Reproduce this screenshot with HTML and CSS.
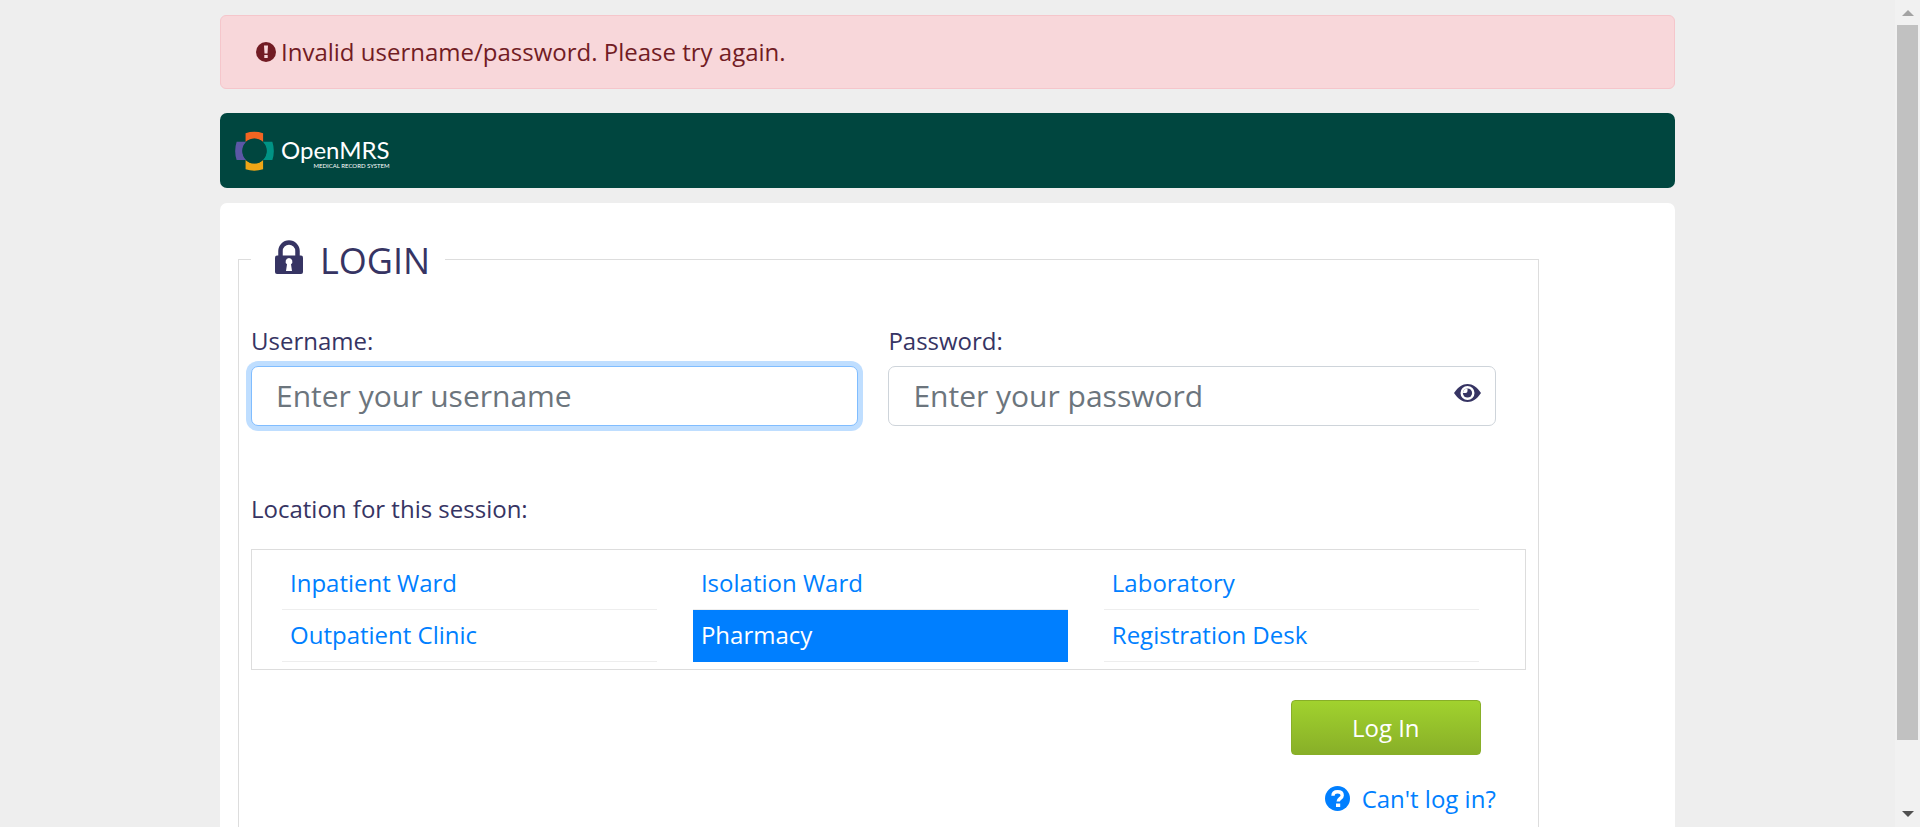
FILE: index.html
```html
<!DOCTYPE html>
<html lang="en">
<head>
<meta charset="utf-8">
<title>Login</title>
<link rel="stylesheet" href="styles.css">
</head>
<body>
<div class="shell">
  <div class="viewport">
    <div class="container">
      <div class="alert" role="alert">
        <svg class="alert-icon" viewBox="0 0 20 20" aria-hidden="true"><circle cx="10" cy="10" r="10" fill="#721c24"/><path d="M8 3.5h4l-.5 8h-3zM8.3 13h3.4v3H8.3z" fill="#f8d7da"/></svg>
        <span>Invalid username/password. Please try again.</span>
      </div>

      <header class="header">
        <a class="logo" href="#">
          <svg class="logo-mark" viewBox="30 34 118 120" aria-hidden="true">
            <path d="M62 40Q88 31 115 40V67A37 37 0 0 0 62 67Z" fill="#f26522"/>
            <path d="M62 149Q88 158 115 149V121A37 37 0 0 1 62 121Z" fill="#eea616"/>
            <path d="M35 66H65A37 37 0 0 0 65 121H35Q26 94 35 66Z" fill="#5b57a6"/>
            <path d="M143 66H113A37 37 0 0 1 113 121H143Q152 94 143 66Z" fill="#009384"/>
            <circle cx="89" cy="94" r="37" fill="#00463f"/>
          </svg>
          <span class="logo-words">
            <span class="logo-name">OpenMRS</span>
            <span class="logo-tag">MEDICAL RECORD SYSTEM</span>
          </span>
        </a>
      </header>

      <main class="content">
        <form>
          <fieldset class="login">
            <legend class="legend">
              <svg class="lock-icon" viewBox="0 0 28 34" aria-hidden="true"><path d="M5.500 17V11a8.500 8.500 0 0 1 17 0v6" fill="none" stroke="#363463" stroke-width="4.500"/><rect y="15.500" width="28" height="18.500" rx="2" fill="#363463"/><path d="M14 18a3.500 3.500 0 0 0-2 6.300L11 31h6l-1-6.700A3.500 3.500 0 0 0 14 18z" fill="#fff"/></svg>
              <span>LOGIN</span>
            </legend>

            <div class="fields">
              <div class="field">
                <label for="username">Username:</label>
                <input class="input input-focused" id="username" type="text" placeholder="Enter your username">
              </div>
              <div class="field">
                <label for="password">Password:</label>
                <div class="password">
                  <input class="input" id="password" type="password" placeholder="Enter your password">
                  <button class="eye" type="button" aria-label="Show password">
                    <svg viewBox="0 0 27 18" aria-hidden="true"><path d="M0 9C4 3 8.500 0 13.500 0S23 3 27 9c-4 6-8.500 9-13.500 9S4 15 0 9z" fill="#363463"/><circle cx="13.500" cy="9" r="7" fill="#fff"/><circle cx="13.500" cy="9" r="4.600" fill="#363463"/><path d="M9 9a4.500 4.500 0 0 1 4.500-4.500V7A2 2 0 0 1 11.500 9z" fill="#fff"/></svg>
                  </button>
                </div>
              </div>
            </div>

            <p class="location-label" id="location-label">Location for this session:</p>
            <ul class="locations" aria-labelledby="location-label">
              <li><a class="location" href="#">Inpatient Ward</a></li>
              <li><a class="location" href="#">Isolation Ward</a></li>
              <li><a class="location" href="#">Laboratory</a></li>
              <li><a class="location" href="#">Outpatient Clinic</a></li>
              <li><a class="location location-selected" href="#">Pharmacy</a></li>
              <li><a class="location" href="#">Registration Desk</a></li>
            </ul>

            <div class="actions">
              <button class="submit" type="submit">Log In</button>
            </div>
            <div class="help">
              <a class="help-link" href="#">
                <svg class="help-icon" viewBox="0 0 25 25" aria-hidden="true"><circle cx="12.500" cy="12.500" r="12.500" fill="#007fff"/><path d="M8 9.800C8 7 10 5.700 12.600 5.700s4.600 1.300 4.600 3.700c0 3-4 3-4 6.200" fill="none" stroke="#fff" stroke-width="3.400"/><path d="M11 17.500h4.200v3.500H11z" fill="#fff"/></svg>
                <span>Can't log in?</span>
              </a>
            </div>
          </fieldset>
        </form>
      </main>
    </div>
  </div>
  <div class="scrollbar" aria-hidden="true">
    <svg class="arrow" viewBox="0 0 12 6"><path d="M0 6L6 0l6 6z" fill="#a3a3a3"/></svg>
    <div class="track"><div class="thumb"></div></div>
    <svg class="arrow" viewBox="0 0 12 6"><path d="M0 0l6 6 6-6z" fill="#505050"/></svg>
  </div>
</div>
</body>
</html>
```

FILE: styles.css
```css
* { box-sizing: border-box; }

body {
  margin: 0;
  background: #eee;
  color: #363463;
  font-family: "Open Sans", sans-serif;
  font-size: 24px;
  line-height: 36px;
}

a { color: #007fff; text-decoration: none; }
button, input { font: inherit; }

.shell {
  display: grid;
  grid-template-columns: 1fr 25px;
  height: 100vh;
}

.viewport { overflow: hidden; }

.container {
  max-width: 1455px;
  margin: 0 auto;
  padding-top: 15px;
}

.alert {
  display: flex;
  align-items: center;
  gap: 5px;
  margin-bottom: 24px;
  padding: 18px 35px;
  border: 1px solid #f5c6cb;
  border-radius: 6px;
  background: #f8d7da;
  color: #721c24;
}
.alert-icon { width: 20px; height: 20px; }

.header {
  display: flex;
  align-items: center;
  min-height: 75px;
  margin-bottom: 15px;
  padding: 0 15px;
  border-radius: 7px;
  background: #00463f;
}
.logo { display: flex; align-items: center; gap: 7px; color: #fff; }
.logo-mark { width: 39px; height: 40px; }
.logo-words {
  display: flex;
  flex-direction: column;
  align-items: flex-end;
  padding-top: 7px;
  font-family: Lato, sans-serif;
}
.logo-name { font-size: 24px; line-height: 24px; }
.logo-tag { font-size: 6px; line-height: 8px; }

.content {
  padding: 27px 18px 60px;
  border-radius: 7px;
  background: #fff;
}

.login {
  width: calc(100% * 11 / 12);
  margin: 0;
  padding: 35px 12px 60px;
  border: 1px solid #ddd;
}
.legend {
  display: flex;
  align-items: center;
  gap: 17px;
  padding: 4px 15px 0 24px;
  font-size: 36px;
  line-height: 54px;
}
.lock-icon { width: 28px; height: 34px; margin-bottom: 8px; }

.fields {
  display: grid;
  grid-template-columns: 1fr 1fr;
  gap: 30px;
  padding-right: 30px;
}
.field { display: flex; flex-direction: column; gap: 7px; }
.input {
  width: 100%;
  height: 60px;
  padding: 0 24px 2px;
  border: 1px solid #ced4da;
  border-radius: 7px;
  background: #fff;
  color: #495057;
  font-size: 30px;
  outline: none;
}
.input::placeholder { color: #6c757d; opacity: 1; }
.input-focused {
  border-color: #80bdff;
  box-shadow: 0 0 0 5px rgba(0, 123, 255, 0.25);
}
.password { position: relative; }
.eye {
  position: absolute;
  top: 18px;
  right: 15px;
  display: flex;
  padding: 0;
  border: 0;
  background: none;
}
.eye svg { width: 27px; height: 18px; }

.location-label { margin: 65px 0 22px; }
.locations {
  display: grid;
  grid-template-columns: repeat(3, 1fr);
  column-gap: 36px;
  margin: 0;
  padding: 8px 46px 7px 30px;
  border: 1px solid #ddd;
  list-style: none;
}
.location {
  display: block;
  padding: 7px 8px 8px;
  border-bottom: 1px solid #eee;
}
.location-selected {
  border-color: #007fff;
  background: #007fff;
  color: #fff;
}

.actions {
  display: flex;
  justify-content: flex-end;
  margin: 30px 45px 26px 0;
}
.submit {
  min-width: 190px;
  height: 55px;
  border: 1px solid #88af28;
  border-radius: 4px;
  background: linear-gradient(#a1d22e, #88af28);
  color: #fff;
}
.help { display: flex; justify-content: flex-end; padding-right: 30px; }
.help-link { display: flex; align-items: center; gap: 12px; }
.help-icon { width: 25px; height: 25px; margin-bottom: 2px; }

.scrollbar {
  display: flex;
  flex-direction: column;
  align-items: center;
  gap: 9px;
  padding: 10px 2px;
  background: #f1f1f1;
}
.arrow { width: 12px; height: 6px; }
.track { flex: 1; width: 21px; }
.thumb { height: 92%; background: #c1c1c1; }
```
